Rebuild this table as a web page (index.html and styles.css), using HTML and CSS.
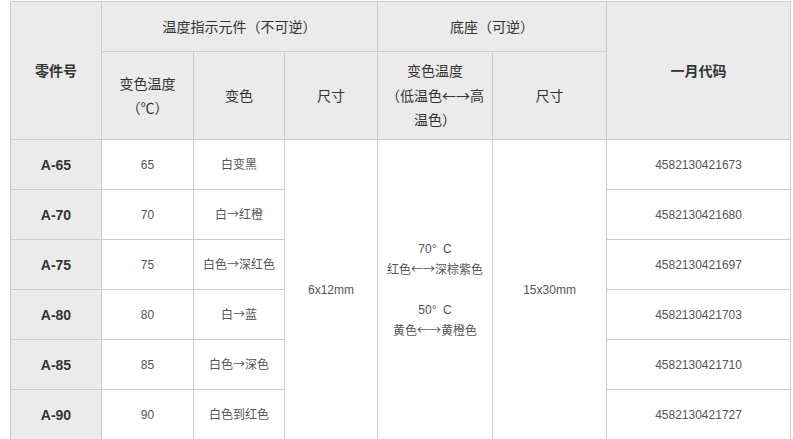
FILE: index.html
```html
<!DOCTYPE html>
<html lang="zh-CN">
<head>
<meta charset="utf-8">
<title>温度指示元件</title>
<link rel="stylesheet" href="styles.css">
</head>
<body>
<table class="spec">
  <colgroup>
    <col class="w-part">
    <col class="w-temp">
    <col class="w-color">
    <col class="w-size">
    <col class="w-btemp">
    <col class="w-bsize">
    <col class="w-code">
  </colgroup>
  <thead>
    <tr class="h-row1">
      <th rowspan="2" class="strong">零件号</th>
      <th colspan="3">温度指示元件（不可逆）</th>
      <th colspan="2">底座（可逆）</th>
      <th rowspan="2" class="strong">一月代码</th>
    </tr>
    <tr class="h-row2">
      <th>变色温度<br>（℃）</th>
      <th>变色</th>
      <th>尺寸</th>
      <th>变色温度<br>（低温色<span class="arrow">←→</span>高<br>温色）</th>
      <th>尺寸</th>
    </tr>
  </thead>
  <tbody>
    <tr>
      <td class="part">A-65</td>
      <td>65</td>
      <td>白变黑</td>
      <td rowspan="6">6x12mm</td>
      <td rowspan="6" class="base">70°&nbsp; C<br>红色<span class="arrow">←→</span>深棕紫色<br><br>50°&nbsp; C<br>黄色<span class="arrow">←→</span>黄橙色</td>
      <td rowspan="6">15x30mm</td>
      <td>4582130421673</td>
    </tr>
    <tr>
      <td class="part">A-70</td>
      <td>70</td>
      <td>白<span class="arrow">→</span>红橙</td>
      <td>4582130421680</td>
    </tr>
    <tr>
      <td class="part">A-75</td>
      <td>75</td>
      <td>白色<span class="arrow">→</span>深红色</td>
      <td>4582130421697</td>
    </tr>
    <tr>
      <td class="part">A-80</td>
      <td>80</td>
      <td>白<span class="arrow">→</span>蓝</td>
      <td>4582130421703</td>
    </tr>
    <tr>
      <td class="part">A-85</td>
      <td>85</td>
      <td>白色<span class="arrow">→</span>深色</td>
      <td>4582130421710</td>
    </tr>
    <tr>
      <td class="part">A-90</td>
      <td>90</td>
      <td>白色到红色</td>
      <td>4582130421727</td>
    </tr>
  </tbody>
</table>
</body>
</html>
```

FILE: styles.css
```css
html, body {
  margin: 0;
  padding: 0;
  background: #ffffff;
}

body {
  font-family: "Liberation Sans", "Noto Sans CJK SC", sans-serif;
  padding: 1px 0 0 10px;
}

.spec {
  border-collapse: collapse;
  table-layout: fixed;
  width: 780px;
}

.w-part { width: 91px; }
.w-temp { width: 92px; }
.w-color { width: 91px; }
.w-size { width: 93px; }
.w-btemp { width: 115px; }
.w-bsize { width: 114px; }
.w-code { width: 184px; }

.spec th,
.spec td {
  border: 1px solid #cccccc;
  padding: 0;
  text-align: center;
  vertical-align: middle;
}

.spec th {
  background: #ebebeb;
  color: #333333;
  font-size: 14px;
  font-weight: normal;
  line-height: 24px;
}

.spec th.strong {
  font-weight: bold;
}

.h-row1 { height: 50px; }
.h-row2 { height: 88px; }

.spec tbody tr { height: 50px; }

.spec td {
  font-size: 12px;
  line-height: 20px;
  color: #555555;
  background: #ffffff;
}

.spec td.part {
  background: #ebebeb;
  color: #333333;
  font-size: 14px;
  font-weight: bold;
}

.arrow {
  font-family: "Noto Sans CJK SC", sans-serif;
  font-weight: normal;
}
```
